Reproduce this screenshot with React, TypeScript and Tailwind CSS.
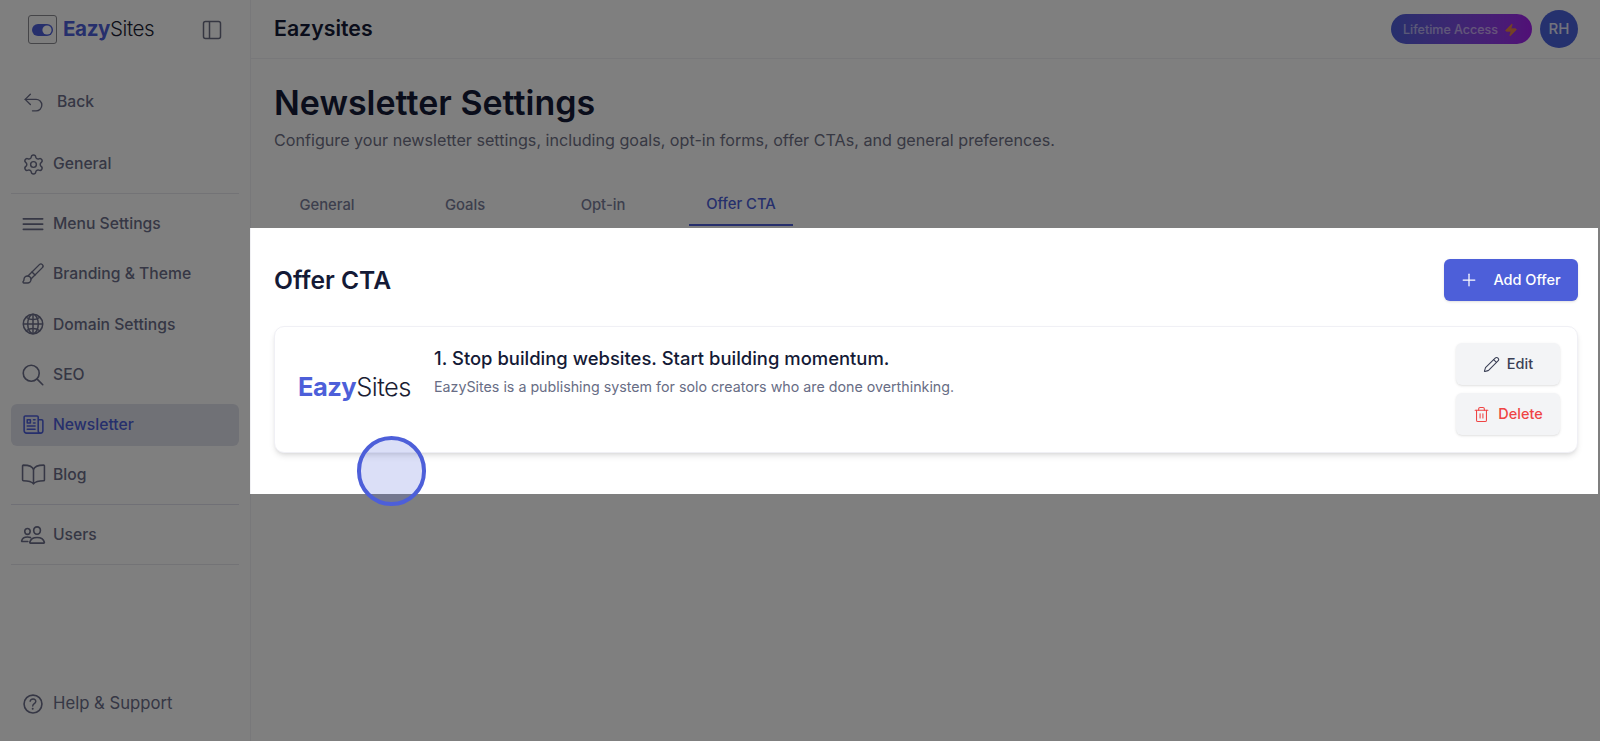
import React from "react";
import { Undo2, Settings, Brush, Plus, Pencil, Trash2, Zap } from "lucide-react";
import {
  IoMenuOutline,
  IoGlobeOutline,
  IoSearchOutline,
  IoBookOutline,
  IoPeopleOutline,
  IoHelpCircleOutline,
} from "react-icons/io5";
import { HiOutlineNewspaper } from "react-icons/hi2";

const rowBase = "flex h-[42px] items-center gap-[9px] rounded-md px-[11px] text-[15.7px] font-medium";

function Row({ icon, label, active }: { icon: React.ReactNode; label: string; active?: boolean }) {
  return (
    <div className={active ? `${rowBase} bg-[#e1e3ec] text-[#4d5fd9]` : `${rowBase} text-[#6c6f8a]`}>
      <span className="flex h-[22px] w-[22px] shrink-0 items-center justify-center">{icon}</span>
      <span>{label}</span>
    </div>
  );
}

function Wordmark({ size }: { size: string }) {
  return (
    <span className={`font-['Inter',sans-serif] leading-none tracking-[-0.02em] ${size}`}>
      <span className="font-bold text-[#4d5fd9]">Eazy</span>
      <span className="font-light text-[#1a1d33]">Sites</span>
    </span>
  );
}

export default function App() {
  return (
    <div className="relative flex h-screen w-full overflow-hidden bg-white font-['Inter',sans-serif] text-[#141a36]">
      <aside className="flex w-[251px] shrink-0 flex-col border-r border-[#f1f1f4] px-[11px]">
        <div className="flex h-[59px] items-center justify-between pl-[17px] pr-[17px]">
          <div className="flex items-center gap-[6px]">
            <span className="flex h-[29px] w-[29px] items-center justify-center rounded-[3px] border border-[#8a8a90] bg-[#fafafa]">
              <svg width="21" height="12" viewBox="0 0 21 12">
                <rect x="0" y="0" width="21" height="12" rx="6" fill="#4d5fd9" />
                <circle cx="15" cy="6" r="4.6" fill="#fff" />
              </svg>
            </span>
            <Wordmark size="text-[20.6px]" />
          </div>
          <svg width="20" height="20" viewBox="0 0 20 20" fill="none" stroke="#6c6f85" strokeWidth="1.5">
            <rect x="1.5" y="1.5" width="17" height="17" rx="2" />
            <path d="M7.5 1.5v17" />
          </svg>
        </div>
        <div className="mt-[22px] flex h-[42px] items-center gap-[11px] px-[10px] text-[15.7px] font-medium text-[#6c6f8a]">
          <Undo2 size={25} strokeWidth={1.3} className="shrink-0" />
          <span>Back</span>
        </div>
        <div className="mt-[20px]">
          <Row icon={<Settings size={23} strokeWidth={1.5} className="shrink-0" />} label="General" />
        </div>
        <div className="mb-[9px] mt-[8px] h-px bg-[#e6e6ec]" />
        <div className="flex flex-col gap-[8.2px]">
          <Row icon={<IoMenuOutline size={28} className="shrink-0" />} label="Menu Settings" />
          <Row icon={<Brush size={24} strokeWidth={1.4} className="shrink-0" />} label="Branding & Theme" />
          <Row icon={<IoGlobeOutline size={24} className="shrink-0" />} label="Domain Settings" />
          <Row icon={<IoSearchOutline size={26} className="shrink-0" />} label="SEO" />
          <Row icon={<HiOutlineNewspaper size={25} className="shrink-0" />} label="Newsletter" active />
          <Row icon={<IoBookOutline size={25} className="shrink-0" />} label="Blog" />
        </div>
        <div className="mb-[9px] mt-[8px] h-px bg-[#e0e1ec]" />
        <Row icon={<IoPeopleOutline size={26} className="shrink-0" />} label="Users" />
        <div className="mt-[8px] h-px bg-[#e6e6ec]" />
        <div className="mt-auto pb-[16px]">
          <div className="flex h-[42px] items-center gap-[9px] px-[11px] text-[16.7px] text-[#6c6f8a]">
            <span className="flex h-[22px] w-[22px] shrink-0 items-center justify-center">
              <IoHelpCircleOutline size={26} className="shrink-0" />
            </span>
            <span>Help &amp; Support</span>
          </div>
        </div>
      </aside>

      <main className="flex min-w-0 flex-1 flex-col">
        <header className="flex h-[59px] shrink-0 items-center justify-between border-b border-[#f1f1f4] pl-[23px] pr-[22px]">
          <h2 className="text-[21.3px] font-semibold text-[#141a36]">Eazysites</h2>
          <div className="flex items-center gap-[8px]">
            <div className="flex h-[30px] w-[141px] items-center justify-center gap-[6px] rounded-full bg-gradient-to-r from-[#4d5fd9] to-[#a21fee] pr-[2px] pt-[2px] text-[12.5px] font-medium text-white/55">
              <span>Lifetime Access</span>
              <Zap size={14} strokeWidth={1.5} className="fill-[#e8824c] text-[#e8824c]" />
            </div>
            <div className="flex h-[38px] w-[38px] items-center justify-center rounded-full bg-[#4b62dc] text-[15px] font-medium text-white/85">
              RH
            </div>
          </div>
        </header>

        <div className="pl-[23px] pr-[22px] pt-[21px]">
          <h1 className="text-[34px] font-semibold leading-[46px] text-[#141a36]">Newsletter Settings</h1>
          <p className="mt-[2px] text-[16.15px] leading-6 text-[#6f7186]">
            Configure your newsletter settings, including goals, opt-in forms, offer CTAs, and general preferences.
          </p>
          <div className="ml-[1px] mt-[32px] grid w-[518px] grid-cols-4 gap-[34px] text-[14.8px] font-medium text-[#7b7f9b]">
            <div className="flex h-[42px] items-center justify-center">General</div>
            <div className="flex h-[42px] items-center justify-center">Goals</div>
            <div className="flex h-[42px] items-center justify-center">Opt-in</div>
            <div className="flex h-[42px] items-center justify-center border-b-2 border-[#4d5fd9] text-[#4d5fd9]">
              Offer CTA
            </div>
          </div>
        </div>

        <section className="pl-[23px] pr-[22px] pt-[33px]">
          <div className="flex items-center justify-between">
            <h3 className="text-[24.6px] font-semibold text-[#141a36]">Offer CTA</h3>
            <button className="flex h-[42px] w-[134px] items-center justify-center gap-[14px] rounded-md bg-[#4d5fd9] pr-[2px] text-[14.5px] font-medium text-white shadow-sm">
              <Plus size={20} strokeWidth={1.5} />
              <span>Add Offer</span>
            </button>
          </div>
          <div className="mt-[25px] flex h-[126.5px] items-start rounded-[10px] border border-[#f0f0f5] bg-white shadow-md">
            <div className="flex h-full w-[159px] shrink-0 items-center justify-center pb-[5px]">
              <Wordmark size="text-[25.5px]" />
            </div>
            <div className="flex-1 pt-[19px]">
              <h4 className="text-[18.45px] font-medium leading-6 text-[#141a36]">
                1. Stop building websites. Start building momentum.
              </h4>
              <p className="mt-[7px] text-[14.25px] leading-5 text-[#686d85]">
                EazySites is a publishing system for solo creators who are done overthinking.
              </p>
            </div>
            <div className="mr-[17px] mt-[16px] flex w-[104px] flex-col gap-[8px]">
              <button className="flex h-[42px] items-center justify-center gap-[7px] rounded-md bg-[#f3f4f6] text-[14.5px] font-medium text-[#3a3f55] shadow-sm">
                <Pencil size={17} strokeWidth={1.5} />
                <span>Edit</span>
              </button>
              <button className="flex h-[42px] items-center justify-center gap-[8px] rounded-md bg-[#f3f4f6] text-[14.5px] font-medium text-[#ef4444] shadow-sm">
                <Trash2 size={17} strokeWidth={1.5} />
                <span>Delete</span>
              </button>
            </div>
          </div>
        </section>
      </main>

      <div className="pointer-events-none absolute left-[250px] top-[228px] h-[265.5px] w-[1348px] shadow-[0_0_0_2000px_rgba(0,0,0,0.5)]" />
      <div className="pointer-events-none absolute left-[356.5px] top-[436px] h-[69.5px] w-[69.5px] rounded-full border-4 border-[#4d5fd9] bg-[#4d5fd9]/20" />
    </div>
  );
}
